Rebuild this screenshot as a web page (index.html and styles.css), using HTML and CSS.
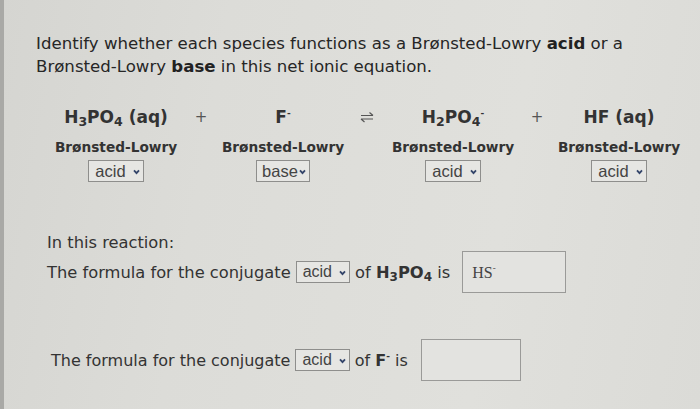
FILE: index.html
```html
<!DOCTYPE html>
<html>
<head>
<meta charset="utf-8">
<link rel="stylesheet" href="styles.css">
</head>
<body>
<div class="page">
  <p class="title">Identify whether each species functions as a Brønsted-Lowry <b>acid</b> or a<br>Brønsted-Lowry <b>base</b> in this net ionic equation.</p>

  <div class="equation">
    <div class="species">H<sub>3</sub>PO<sub>4</sub> (aq)</div>
    <div class="op">+</div>
    <div class="species">F<sup>-</sup></div>
    <div class="op arrow">
      <svg width="14" height="12" viewBox="0 0 14 12"><path d="M1 4.5H13M13 4.5L9.5 1.5M1 8H13M1 8L4.5 11" fill="none" stroke="#555" stroke-width="1.2"/></svg>
    </div>
    <div class="species">H<sub>2</sub>PO<sub>4</sub><sup>-</sup></div>
    <div class="op">+</div>
    <div class="species">HF (aq)</div>

    <div class="label"><span>Brønsted-Lowry</span></div>
    <div></div>
    <div class="label"><span>Brønsted-Lowry</span></div>
    <div></div>
    <div class="label"><span>Brønsted-Lowry</span></div>
    <div></div>
    <div class="label"><span>Brønsted-Lowry</span></div>

    <div class="cell"><span class="select">acid<svg class="chev" width="7" height="6" viewBox="0 0 7 6"><path d="M1 1.4L3.5 4.2L6 1.4" fill="none" stroke="#34456a" stroke-width="1.8"/></svg></span></div>
    <div></div>
    <div class="cell"><span class="select tight">base<svg class="chev" width="7" height="6" viewBox="0 0 7 6"><path d="M1 1.4L3.5 4.2L6 1.4" fill="none" stroke="#34456a" stroke-width="1.8"/></svg></span></div>
    <div></div>
    <div class="cell"><span class="select">acid<svg class="chev" width="7" height="6" viewBox="0 0 7 6"><path d="M1 1.4L3.5 4.2L6 1.4" fill="none" stroke="#34456a" stroke-width="1.8"/></svg></span></div>
    <div></div>
    <div class="cell"><span class="select">acid<svg class="chev" width="7" height="6" viewBox="0 0 7 6"><path d="M1 1.4L3.5 4.2L6 1.4" fill="none" stroke="#34456a" stroke-width="1.8"/></svg></span></div>
  </div>

  <div class="reaction">
    <p class="intro">In this reaction:</p>
    <div class="line first">
      <span>The formula for the conjugate</span>
      <span class="select">acid<svg class="chev" width="7" height="6" viewBox="0 0 7 6"><path d="M1 1.4L3.5 4.2L6 1.4" fill="none" stroke="#34456a" stroke-width="1.8"/></svg></span>
      <span>of <b>H<sub>3</sub>PO<sub>4</sub></b> is</span>
      <span class="answer"><span class="ans-text">HS<sup>-</sup></span></span>
    </div>
    <div class="line second">
      <span>The formula for the conjugate</span>
      <span class="select">acid<svg class="chev" width="7" height="6" viewBox="0 0 7 6"><path d="M1 1.4L3.5 4.2L6 1.4" fill="none" stroke="#34456a" stroke-width="1.8"/></svg></span>
      <span>of <b>F<sup>-</sup></b> is</span>
      <span class="answer small"></span>
    </div>
  </div>
</div>
</body>
</html>
```

FILE: styles.css
```css
html, body {
  margin: 0;
  padding: 0;
}
body {
  width: 700px;
  height: 409px;
  overflow: hidden;
  background: linear-gradient(100deg, #d5d5d1 0%, #dcdcd8 30%, #e0e0dc 70%, #dbdbd7 100%);
  font-family: "DejaVu Sans", sans-serif;
  color: #2e2e2e;
}
.page {
  height: 409px;
  box-sizing: border-box;
  border-left: 4px solid #a9a9a6;
  padding: 32px 0 0 32px;
}
.title {
  margin: 0;
  font-size: 16.6px;
  line-height: 23px;
  color: #262626;
}
.title b {
  font-weight: bold;
  color: #222;
}
.equation {
  display: grid;
  grid-template-columns: 128px 42px 122px 46px 126px 42px 122px;
  margin: 29px 0 0 16px;
  color: #333;
}
.species {
  text-align: center;
  font-weight: bold;
  font-size: 17px;
  line-height: 20px;
  height: 26px;
}
.species sub {
  font-size: 12.5px;
  vertical-align: -3px;
  line-height: 0;
}
.species sup {
  font-size: 9px;
  vertical-align: 7px;
  line-height: 0;
}
.op {
  text-align: center;
  font-size: 15px;
  line-height: 20px;
  color: #555;
}
.arrow {
  display: flex;
  justify-content: center;
  align-items: center;
  height: 20px;
}
.label {
  display: flex;
  justify-content: center;
  white-space: nowrap;
  font-weight: bold;
  font-size: 13.7px;
  line-height: 16px;
  margin-top: 6px;
  color: #333;
}
.cell {
  display: flex;
  justify-content: center;
  padding-top: 5px;
}
.select {
  display: inline-flex;
  align-items: center;
  gap: 7px;
  height: 20px;
  padding: 0 3px 0 6px;
  border: 1px solid #8e8e8c;
  background: #e6e6e3;
  font-family: "Liberation Sans", sans-serif;
  font-size: 16.5px;
  color: #444;
  box-sizing: content-box;
}
.select.tight {
  gap: 1px;
  padding-left: 5px;
}
.chev {
  display: block;
  margin-top: 1px;
}
.reaction {
  margin: 51px 0 0 11px;
  color: #333;
  font-family: "DejaVu Sans", sans-serif;
  font-size: 16.3px;
}
.reaction .select {
  font-size: 16px;
}
.intro {
  margin: 0;
  line-height: 20px;
}
.line {
  display: flex;
  align-items: center;
  gap: 5px;
}
.line b sub {
  font-size: 12px;
  vertical-align: -3px;
  line-height: 0;
}
.line b sup {
  font-size: 9px;
  vertical-align: 7px;
  line-height: 0;
}
.line.first {
  margin-top: -2px;
}
.line.second {
  margin-top: 46px;
  margin-left: 4px;
  font-size: 16px;
}
.answer {
  display: flex;
  align-items: center;
  width: 102px;
  height: 40px;
  border: 1px solid #9a9a98;
  background: #e3e3e0;
  margin-left: 7px;
}
.answer.small {
  width: 98px;
  margin-left: 8px;
}
.ans-text {
  font-family: "Liberation Serif", serif;
  font-size: 16px;
  color: #444;
  margin-left: 9px;
  margin-top: 1px;
}
.ans-text sup {
  font-size: 9px;
  vertical-align: 7px;
  line-height: 0;
}
```
